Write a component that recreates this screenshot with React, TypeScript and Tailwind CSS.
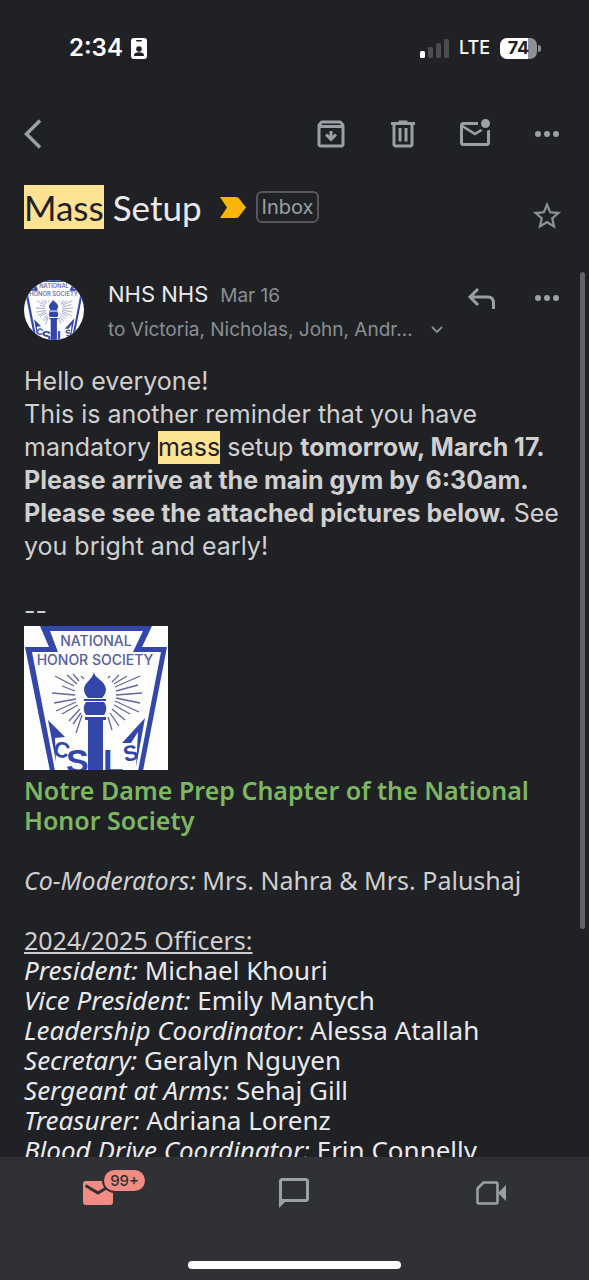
import type { ReactNode } from 'react';

interface Officer {
  role: string;
  name: string;
}

const OFFICERS: Officer[] = [
  { role: 'President:', name: 'Michael Khouri' },
  { role: 'Vice President:', name: 'Emily Mantych' },
  { role: 'Leadership Coordinator:', name: 'Alessa Atallah' },
  { role: 'Secretary:', name: 'Geralyn Nguyen' },
  { role: 'Sergeant at Arms:', name: 'Sehaj Gill' },
  { role: 'Treasurer:', name: 'Adriana Lorenz' },
  { role: 'Blood Drive Coordinator:', name: 'Erin Connelly' },
];

// Light rays on both sides of the torch, as x1 y1 x2 y2
const RAYS = [
  [31, 50, 50, 60],
  [43, 49, 53, 58],
  [49, 48, 55, 55],
  [57, 50, 60, 53],
  [28, 67, 51, 69],
  [38, 60, 51, 65],
  [30, 77, 52, 73],
  [32, 85, 52, 76],
  [38, 88, 54, 79],
  [45, 95, 56, 83],
  [52, 107, 58, 89],
  [49, 98, 57, 87],
  [84, 52, 86, 50],
  [88, 56, 95, 49],
  [90, 58, 103, 50],
  [91, 61, 116, 50],
  [92, 65, 114, 59],
  [92, 69, 118, 67],
  [92, 72, 116, 77],
  [91, 75, 115, 86],
  [90, 79, 106, 88],
  [88, 83, 101, 94],
  [86, 87, 95, 100],
  [84, 91, 88, 104],
];

/**
 * National Honor Society keystone emblem
 */
function HonorSocietyLogo({ className }: { className?: string }) {
  return (
    <svg viewBox="0 0 144 144" className={className} role="img" aria-label="National Honor Society">
      <rect width="144" height="144" fill="#fdfdfd" />
      <path
        fill="#3347ab"
        fillRule="evenodd"
        d="M16 0H128L118 21H143L119 145H26L1 21H25ZM26 5L34 26H8L31 145H114L137 26H109L119 5Z"
      />
      <g fill="#5560a0" fontFamily="Inter, sans-serif" fontWeight="500" textAnchor="middle">
        <text x="72" y="20" fontSize="14">NATIONAL</text>
        <text x="71" y="39" fontSize="14">HONOR SOCIETY</text>
      </g>
      <g stroke="#6168a0" strokeWidth="1.3">
        {RAYS.map(([x1, y1, x2, y2]) => (
          <line key={`${x1}-${y1}`} x1={x1} y1={y1} x2={x2} y2={y2} />
        ))}
      </g>
      {/* Torch */}
      <g fill="#3347ab">
        <path d="M70 46C70 52 81 54 82 63C82 67 80 70 78 72H64C61 69 60 66 60 63C60 57 68 54 70 46Z" />
        <path d="M60 73H82V75H60Z" />
        <path d="M62 76H80C83 80 83 85 80 89H62C59 85 59 80 62 76Z" />
        <path d="M61 91H82V94H79V145H64V94H61Z" />
      </g>
      {/* Initials along the lower edge */}
      <g fill="#3347ab" fontFamily="Liberation Sans, sans-serif" fontWeight="bold">
        <path d="M24 94L41 111L31 112L32 136Z" />
        <path d="M121 92L98 117H107L114 106L112 141Z" />
        <text x="28" y="129" fontSize="22" transform="rotate(15 28 129)">C</text>
        <text x="42" y="147" fontSize="34">S</text>
        <text x="79" y="147" fontSize="34">L</text>
        <text x="101" y="136" fontSize="22" transform="rotate(-12 101 136)">S</text>
      </g>
    </svg>
  );
}

function Icon({ d, className = 'size-9' }: { d: string; className?: string }) {
  return (
    <svg viewBox="0 0 24 24" fill="currentColor" className={className} aria-hidden="true">
      <path d={d} />
    </svg>
  );
}

function IconButton({ label, children }: { label: string; children: ReactNode }) {
  return (
    <button type="button" aria-label={label} className="flex size-12 items-center justify-center">
      {children}
    </button>
  );
}

const ICONS = {
  archive:
    'M20.54 5.23l-1.39-1.68C18.88 3.21 18.47 3 18 3H6c-.47 0-.88.21-1.16.55L3.46 5.23C3.17 5.57 3 6.02 3 6.5V19c0 1.1.9 2 2 2h14c1.1 0 2-.9 2-2V6.5c0-.48-.17-.93-.46-1.27zM6.24 5h11.52l.83 1H5.42l.82-1zM5 19V8h14v11H5zM11 10h2v3.2l1.6-1.6L16 13l-4 4-4-4 1.4-1.4 1.6 1.6z',
  trash:
    'M7 21q-.825 0-1.412-.587T5 19V6H4V4h5V3h6v1h5v2h-1v13q0 .825-.587 1.413T17 21zM17 6H7v13h10zM9 17h2V8H9zm4 0h2V8h-2z',
  unread:
    'M4 20q-.825 0-1.413-.588T2 18V6q0-.825.588-1.413T4 4h10.1q-.1.5-.1 1t.1 1H4l8 5 3.65-2.275q.35.325.763.563t.862.412L12 13 4 8v10h16V9.9q.575-.125 1.075-.35T22 9v9q0 .825-.587 1.413T20 20zm15-12q-1.25 0-2.125-.875T16 5q0-1.25.875-2.125T19 2q1.25 0 2.125.875T22 5t-.875 2.125T19 8',
  more: 'M6 14a2 2 0 1 1 0-4 2 2 0 0 1 0 4zm6 0a2 2 0 1 1 0-4 2 2 0 0 1 0 4zm6 0a2 2 0 1 1 0-4 2 2 0 0 1 0 4z',
  star: 'M22 9.24l-7.19-.62L12 2 9.19 8.63 2 9.24l5.46 4.73L5.82 21 12 17.27 18.18 21l-1.63-7.03L22 9.24zM12 15.4l-3.76 2.27 1-4.28-3.32-2.88 4.38-.38L12 6.1l1.71 4.04 4.38.38-3.32 2.88 1 4.28L12 15.4z',
  chat: 'M2 22V4q0-.825.588-1.413T4 2h16q.825 0 1.413.588T22 4v12q0 .825-.587 1.413T20 18H6zm2-6h16V4H4z',
};

function StatusBar() {
  return (
    <div className="flex h-24 items-center justify-between pr-12 pl-[69px] font-['Inter',sans-serif] text-white">
      <div className="flex items-center gap-2">
        <span className="text-2xl font-semibold">2:34</span>
        <svg viewBox="0 0 16 21" className="h-[21px] w-4" aria-hidden="true">
          <rect width="16" height="21" rx="3" fill="white" />
          <rect x="5" y="2" width="6" height="1.5" rx=".7" fill="#202124" />
          <circle cx="8" cy="11" r="2.8" fill="#202124" />
          <path d="M3 18C3 15 5 14.3 8 14.3S13 15 13 18Z" fill="#202124" />
        </svg>
      </div>
      <div className="flex items-center">
        <svg viewBox="0 0 29 19" className="h-[19px] w-[29px]" aria-hidden="true">
          <rect y="12" width="5" height="7" rx="1.5" fill="white" />
          <rect x="8" y="8" width="5" height="11" rx="1.5" fill="#4b4c4f" />
          <rect x="16" y="4" width="5" height="15" rx="1.5" fill="#4b4c4f" />
          <rect x="24" width="5" height="19" rx="1.5" fill="#4b4c4f" />
        </svg>
        <span className="ml-[10px] text-lg font-medium">LTE</span>
        <div className="ml-[10px] flex items-center">
          <div className="flex h-[21px] w-[37px] items-center justify-center rounded-[7px] bg-linear-to-r from-white from-75% to-[#8f9093] to-75% text-lg font-bold text-[#202124]">
            74
          </div>
          <div className="ml-px h-[7px] w-[3px] rounded-r-full bg-[#8f9093]" />
        </div>
      </div>
    </div>
  );
}

function Toolbar() {
  return (
    <div className="flex h-[75px] items-center justify-between pr-[18px] pl-[9px] text-[#9aa0a6]">
      <IconButton label="Back">
        <svg viewBox="0 0 36 36" className="size-9" aria-hidden="true">
          <path d="M25 4.5L11.5 18L25 31.5" fill="none" stroke="currentColor" strokeWidth="3.5" />
        </svg>
      </IconButton>
      <div className="flex gap-6">
        <IconButton label="Archive">
          <Icon d={ICONS.archive} />
        </IconButton>
        <IconButton label="Delete">
          <Icon d={ICONS.trash} />
        </IconButton>
        <IconButton label="Mark as unread">
          <Icon d={ICONS.unread} />
        </IconButton>
        <IconButton label="More options">
          <Icon d={ICONS.more} />
        </IconButton>
      </div>
    </div>
  );
}

function Subject() {
  return (
    <div className="flex items-start justify-between pt-[14px] pr-[18px] pl-6">
      <div className="flex items-center">
        <h1 className="font-['Lato',sans-serif] text-[35px] leading-[44px] text-[#e8eaed]">
          <mark className="inline-block bg-[#fde293] text-[#202124]">Mass</mark> Setup
        </h1>
        <svg viewBox="0 0 26 21" className="ml-[18px] h-[21px] w-[26px]" aria-hidden="true">
          <path d="M0 0H16Q18 0 19 1.5L26 10.5L19 19.5Q18 21 16 21H0L7 10.5Z" fill="#fbb605" />
        </svg>
        <span className="ml-[10px] rounded-md border-2 border-[#55575b] px-1 font-['Inter',sans-serif] text-xl leading-7 text-[#9aa0a6]">
          Inbox
        </span>
      </div>
      <div className="pt-[7px] text-[#8a8f94]">
        <IconButton label="Star">
          <Icon d={ICONS.star} className="size-[34px]" />
        </IconButton>
      </div>
    </div>
  );
}

function SenderRow() {
  return (
    <div className="flex items-start pt-[39px] pr-[18px] pl-6 font-['Inter',sans-serif] text-[#9aa0a6]">
      <HonorSocietyLogo className="mt-px size-[60px] shrink-0 rounded-full" />
      <div className="ml-6 min-w-0 flex-1">
        <div className="flex items-baseline gap-3 leading-[30px]">
          <span className="text-[22px] text-[#e8eaed]">NHS NHS</span>
          <span className="text-[19px] text-[#8a8f94]">Mar 16</span>
        </div>
        <button type="button" className="flex items-center gap-4 pt-1 text-[19px] leading-[30px] text-[#8a8f94]">
          <span>to Victoria, Nicholas, John, Andr...</span>
          <svg viewBox="0 0 16 16" className="size-4" aria-hidden="true">
            <path d="M3 5L8 10L13 5" fill="none" stroke="currentColor" strokeWidth="1.8" />
          </svg>
        </button>
      </div>
      <div className="-mt-[5px] flex gap-[18px]">
        <IconButton label="Reply">
          <svg viewBox="0 0 36 36" className="size-9" aria-hidden="true">
            <path
              d="M15 9L7 17L15 25M7 17H25Q30.5 17 30.5 23V29"
              fill="none"
              stroke="currentColor"
              strokeWidth="3"
            />
          </svg>
        </IconButton>
        <IconButton label="More message options">
          <Icon d={ICONS.more} />
        </IconButton>
      </div>
    </div>
  );
}

function MessageBody() {
  return (
    <div className="px-6 pt-5 text-[25px] text-[#d0d0d1]">
      <div className="font-['Inter',sans-serif] leading-[33px]">
        <p>Hello everyone!</p>
        <p>
          This is another reminder that you have mandatory{' '}
          <mark className="inline-block bg-[#fde293] text-[#202124]">mass</mark> setup{' '}
          <b>
            tomorrow, March 17. Please arrive at the main gym by 6:30am. Please see the attached
            pictures below.
          </b>{' '}
          See you bright and early!
        </p>
      </div>

      {/* Signature */}
      <div className="pt-[33px] font-['Noto_Sans',sans-serif] leading-[30px]">
        <p className="font-['Inter',sans-serif]">--</p>
        <HonorSocietyLogo className="mb-[5px] size-36" />
        <p className="font-semibold text-[#7db762]">
          Notre Dame Prep Chapter of the National Honor Society
        </p>
        <p className="pt-[30px]">
          <i>Co-Moderators:</i> Mrs. Nahra &amp; Mrs. Palushaj
        </p>
        <p className="pt-[30px] underline">2024/2025 Officers:</p>
        <ul className="text-[26px] text-[#e8eaed]">
          {OFFICERS.map(({ role, name }) => (
            <li key={role}>
              <i>{role}</i> {name}
            </li>
          ))}
        </ul>
      </div>
    </div>
  );
}

function BottomNav() {
  return (
    <nav className="flex h-[123px] shrink-0 flex-col items-center justify-between bg-[#303134] pt-[18px] pb-[11px] text-[#9aa0a6]">
      <div className="grid w-full grid-cols-3 justify-items-center">
        <button type="button" aria-label="Mail, 99+ unread" className="relative">
          <svg viewBox="0 0 36 36" className="size-9" aria-hidden="true">
            <rect x="3" y="6" width="30" height="24" rx="3" fill="#f28b82" />
            <path d="M5.5 10.5L18 18L30.5 10.5" fill="none" stroke="#303134" strokeWidth="3" />
          </svg>
          <span className="absolute -top-[7px] left-[22px] rounded-full border-2 border-[#303134] bg-[#f28b82] px-[6px] font-['Inter',sans-serif] text-[15px] leading-[21px] font-medium text-[#303134]">
            99+
          </span>
        </button>
        <button type="button" aria-label="Chat">
          <Icon d={ICONS.chat} />
        </button>
        <button type="button" aria-label="Meet">
          <svg viewBox="0 0 36 36" className="size-9" aria-hidden="true">
            <path
              d="M10.5 7.5H23Q24.5 7.5 24.5 9V27Q24.5 28.5 23 28.5H6Q4.5 28.5 4.5 27V13.5Z"
              fill="none"
              stroke="currentColor"
              strokeWidth="2.6"
              strokeLinejoin="round"
            />
            <path d="M25 18L33 10V26Z" fill="currentColor" />
          </svg>
        </button>
      </div>
      <div className="h-2 w-[36%] rounded-full bg-white" />
    </nav>
  );
}

export default function App() {
  return (
    <div className="flex h-screen flex-col overflow-hidden bg-[#202124]">
      <StatusBar />
      <Toolbar />
      <main className="relative min-h-0 flex-1 overflow-hidden">
        <Subject />
        <SenderRow />
        <MessageBody />
        {/* Scroll position indicator */}
        <div className="absolute top-[101px] right-1 h-2/3 w-[5px] rounded-full bg-[#636466]" />
      </main>
      <BottomNav />
    </div>
  );
}
